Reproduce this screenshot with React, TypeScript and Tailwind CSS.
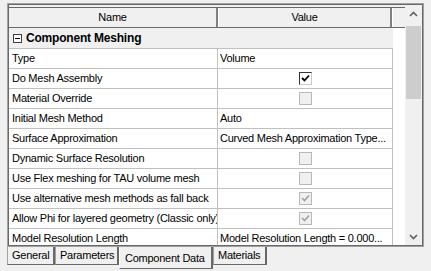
type Check = "on" | "off" | "disOn";

type Row = { name: string; value?: string; check?: Check };

const rows: Row[] = [
  { name: "Type", value: "Volume" },
  { name: "Do Mesh Assembly", check: "on" },
  { name: "Material Override", check: "off" },
  { name: "Initial Mesh Method", value: "Auto" },
  { name: "Surface Approximation", value: "Curved Mesh Approximation Type..." },
  { name: "Dynamic Surface Resolution", check: "off" },
  { name: "Use Flex meshing for TAU volume mesh", check: "off" },
  { name: "Use alternative mesh methods as fall back", check: "disOn" },
  { name: "Allow Phi for layered geometry (Classic only)", check: "disOn" },
  { name: "Model Resolution Length", value: "Model Resolution Length = 0.000..." },
];

function CheckBox({ state }: { state: Check }) {
  if (state === "on") {
    return (
      <div className="flex h-[13px] w-[13px] items-center justify-center border border-t-[#333333] border-l-[#333333] border-r-[#c8c8c8] border-b-[#c8c8c8] bg-white">
        <svg width="9" height="9" viewBox="0 0 9 9">
          <path d="M1 4 L3.5 6.5 L8 1.5" fill="none" stroke="#000" strokeWidth="1.8" />
        </svg>
      </div>
    );
  }
  return (
    <div className="flex h-[13px] w-[13px] items-center justify-center border border-[#b8b8b8] bg-[#f0f0f0]">
      {state === "disOn" && (
        <svg width="9" height="9" viewBox="0 0 9 9">
          <path d="M1 4 L3.5 6.5 L8 1.5" fill="none" stroke="#a0a0a0" strokeWidth="1.6" />
        </svg>
      )}
    </div>
  );
}

function Tab({ label, active, w }: { label: string; active?: boolean; w: string }) {
  if (active) {
    return (
      <div
        className={`${w} flex h-[22px] items-end border-r-2 border-b border-l border-r-[#696969] border-b-[#696969] border-l-white bg-[#f0f0f0] pb-[2px] pl-[5px]`}
      >
        {label}
      </div>
    );
  }
  return (
    <div
      className={`${w} flex h-[18px] items-center border-r-2 border-b border-l border-r-[#696969] border-b-[#696969] border-l-[#a0a0a0] bg-[#f0f0f0] pl-[4px]`}
    >
      {label}
    </div>
  );
}

export default function App() {
  return (
    <div className="h-[271px] w-[431px] overflow-hidden bg-[#f0f0f0] pt-[3px] pl-[7px] font-['Liberation_Sans',Arial,sans-serif] text-[11px] tracking-[-0.25px] text-black">
      <div className="h-[244px] w-[417px] border border-[#a0a0a0]">
        <div className="flex h-full border border-[#696969] bg-[#f0f0f0]">
          <div className="flex w-[396px] flex-col overflow-hidden pt-[2px]">
            <div className="flex h-[21px] shrink-0 border-t border-b border-[#696969]">
              <div className="flex w-[209px] items-center justify-center border-r-2 border-r-[#808080] bg-[#f0f0f0]">
                Name
              </div>
              <div className="flex w-[174px] items-center justify-center border-r-2 border-l border-r-[#808080] border-l-white bg-[#f0f0f0]">
                Value
              </div>
              <div className="flex-1 border-l border-l-white bg-[#f0f0f0]" />
            </div>
            <div className="flex flex-1 flex-col bg-white">
              <div className="flex h-[21px] w-[384px] shrink-0 items-center border-b border-[#c0c0c0] bg-[#f0f0f0]">
                <div className="ml-[4px] flex h-[9px] w-[9px] items-center justify-center border border-[#404040] bg-white">
                  <div className="h-px w-[5px] bg-black" />
                </div>
                <span className="ml-[4px] text-[12px] font-bold tracking-[-0.2px]">Component Meshing</span>
              </div>
              {rows.map((r) => (
                <div key={r.name} className="flex h-[20px] shrink-0">
                  <div className="flex w-[209px] items-center overflow-hidden whitespace-nowrap border-r border-b border-[#c0c0c0] pl-[3px]">
                    {r.name}
                  </div>
                  <div className="flex w-[175px] items-center overflow-hidden whitespace-nowrap border-r border-b border-[#c0c0c0] pl-[2px]">
                    {r.check ? (
                      <div className="flex w-full justify-center pr-[2px]">
                        <CheckBox state={r.check} />
                      </div>
                    ) : (
                      r.value
                    )}
                  </div>
                </div>
              ))}
            </div>
          </div>
          <div className="flex w-[17px] flex-col bg-[#f0f0f0]">
            <div className="flex h-[17px] items-center justify-center">
              <svg width="9" height="6" viewBox="0 0 9 6">
                <path d="M1 5 L4.5 1.5 L8 5" fill="none" stroke="#606060" strokeWidth="1.6" />
              </svg>
            </div>
            <div className="mx-[1px] mt-[4px] h-[73px] bg-[#cdcdcd]" />
            <div className="flex-1" />
            <div className="flex h-[17px] items-center justify-center">
              <svg width="9" height="6" viewBox="0 0 9 6">
                <path d="M1 1 L4.5 4.5 L8 1" fill="none" stroke="#606060" strokeWidth="1.6" />
              </svg>
            </div>
          </div>
        </div>
      </div>
      <div className="flex items-start">
        <Tab label="General" w="w-[48px]" />
        <Tab label="Parameters" w="w-[64px]" />
        <Tab label="Component Data" active w="w-[94px]" />
        <Tab label="Materials" w="w-[54px]" />
      </div>
    </div>
  );
}
